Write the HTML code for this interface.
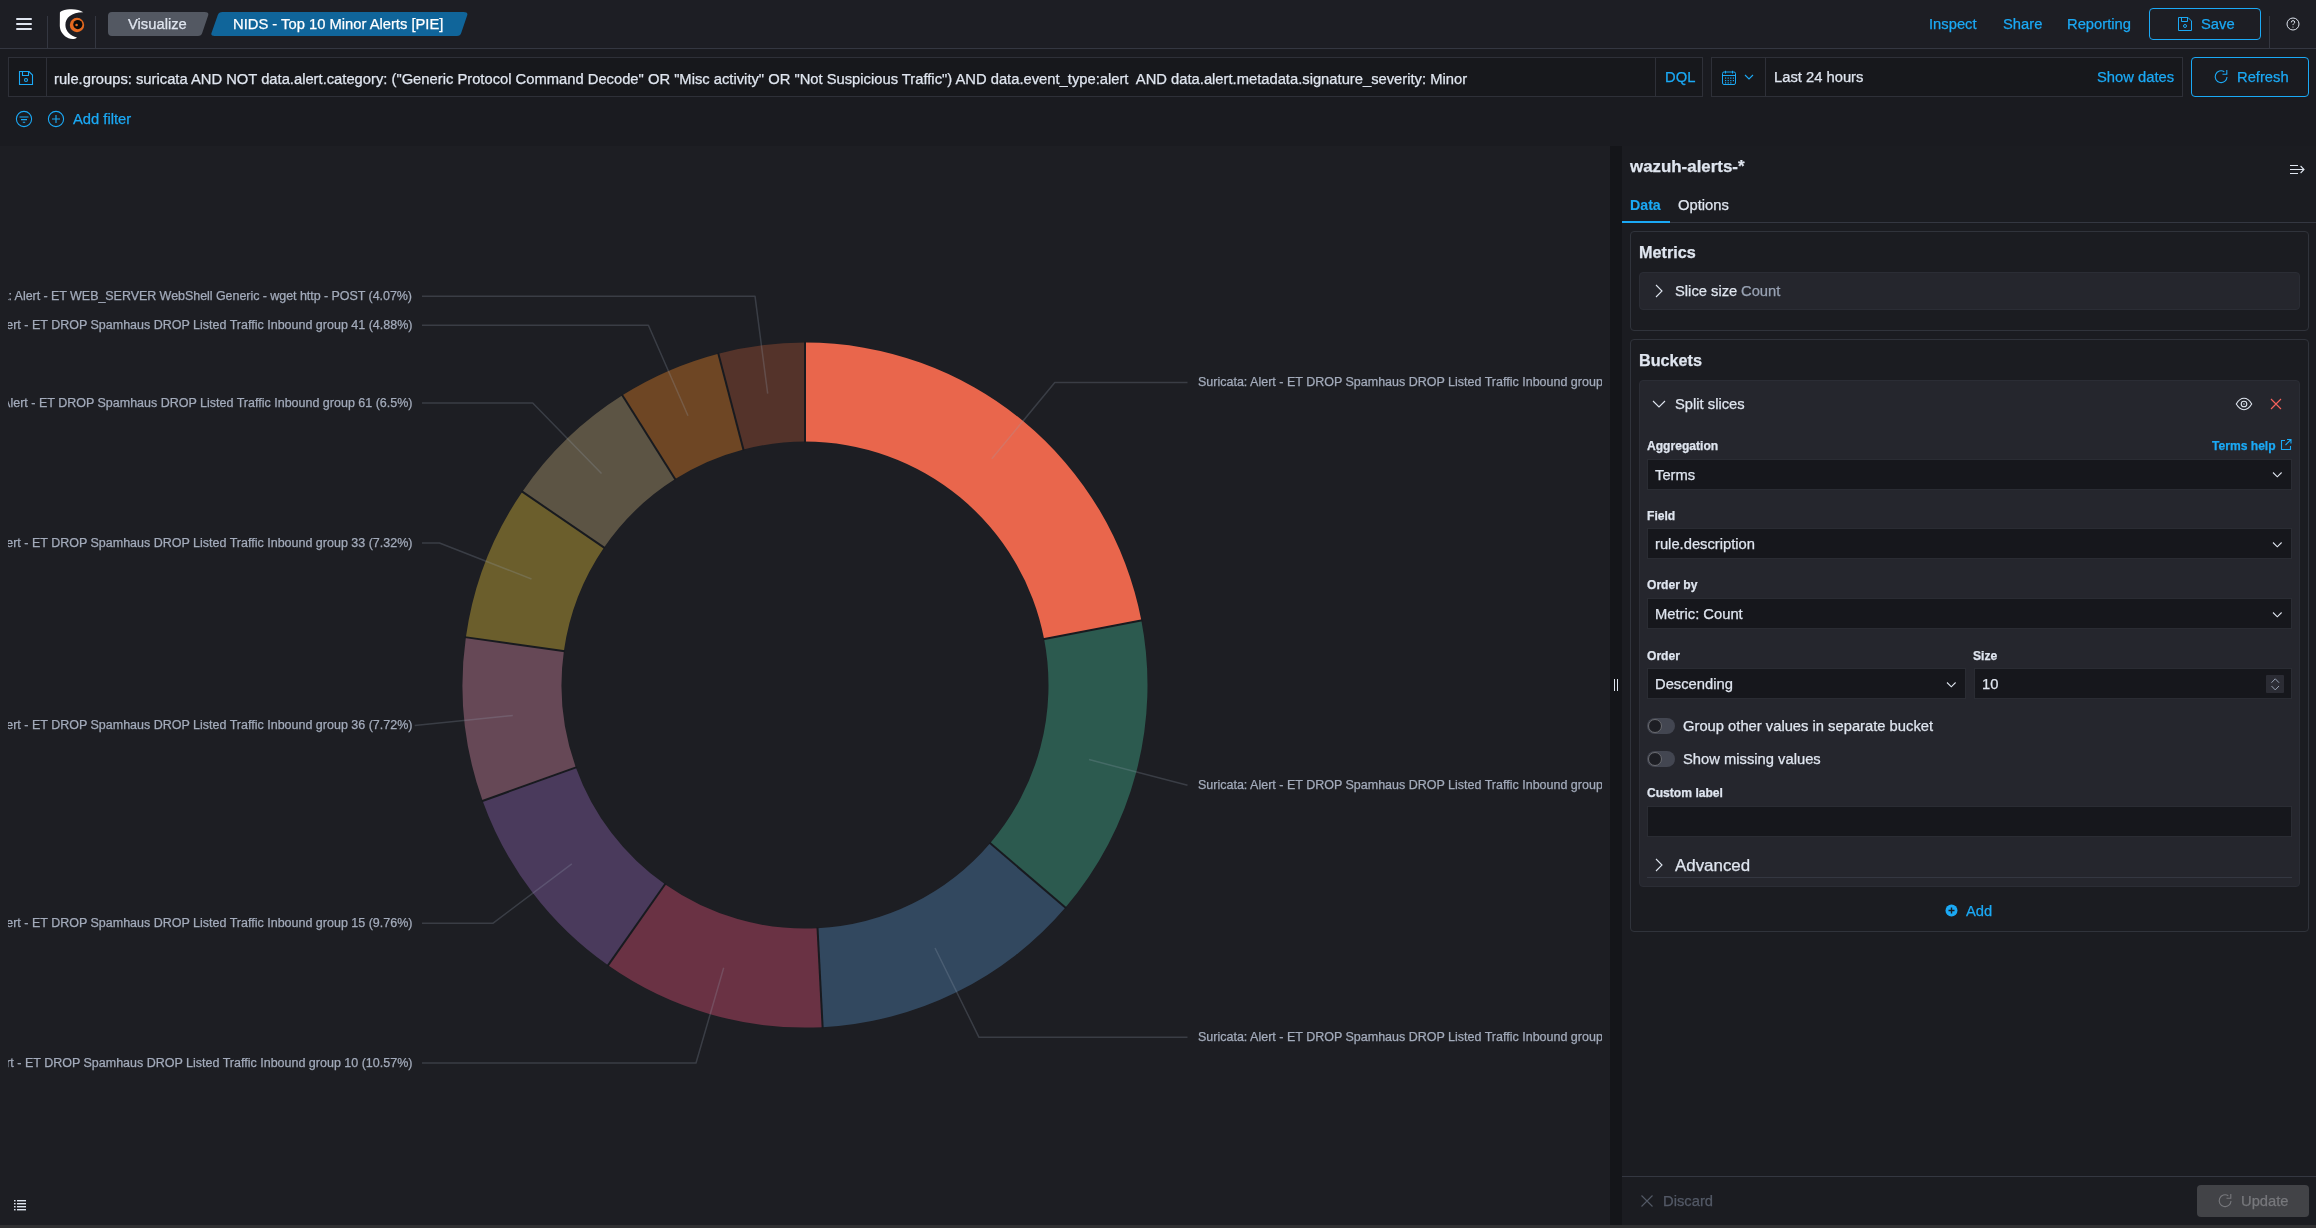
<!DOCTYPE html>
<html><head><meta charset="utf-8">
<style>
*{box-sizing:border-box;margin:0;padding:0}
html,body{width:2316px;height:1228px;overflow:hidden}
body{position:relative;background:#1A1B20;-webkit-font-smoothing:antialiased;font-family:"Liberation Sans",sans-serif;color:#DFE5EF;font-size:14px}
.a{position:absolute}
.t{position:absolute;white-space:pre;line-height:1;will-change:transform;-webkit-text-stroke:0.25px currentColor}
svg{display:block}
</style></head><body>
<div class="a" style="left:0px;top:0px;width:2316px;height:48px;background:#1D1E24;"></div>
<div class="a" style="left:0px;top:48px;width:2316px;height:1px;background:#343741;"></div>
<div class="a" style="left:16px;top:18px;width:16px;height:2px;background:#DFE5EF;border-radius:1px;"></div>
<div class="a" style="left:16px;top:23px;width:16px;height:2px;background:#DFE5EF;border-radius:1px;"></div>
<div class="a" style="left:16px;top:28px;width:16px;height:2px;background:#DFE5EF;border-radius:1px;"></div>
<div class="a" style="left:47px;top:16px;width:1px;height:32px;background:#343741;"></div>
<div class="a" style="left:95px;top:16px;width:1px;height:32px;background:#343741;"></div>
<svg class="a" style="left:0;top:0" width="120" height="48" viewBox="0 0 120 48">
<path fill="#FFFFFF" d="M83.3,12.3 C79.5,9.6 73.5,8.6 67,9.6 C63.5,10.2 60.6,11.3 59.9,12.6 L59.8,26 C60,31.5 63.5,36 68.5,38.3 C71.5,39.6 75,39.3 77,37.6 C70.5,36 65.4,31.2 65.4,25 C65.4,17.8 71.5,12.2 83.3,12.3 Z"/>
<circle cx="77" cy="25" r="7.2" fill="#E5691F"/>
<circle cx="77.8" cy="24.6" r="4.6" fill="#0A0A0A"/>
<circle cx="76.6" cy="25" r="1.3" fill="#E5691F"/>
</svg>
<svg class="a" style="left:100px;top:8px" width="380" height="32" viewBox="100 8 380 32">
<path fill="#535862" d="M112,12 L204.5,12 Q209,12 208.3,15 L202.2,33 Q201.4,36 198,36 L112,36 Q108,36 108,32 L108,16 Q108,12 112,12 Z"/>
<path fill="#10659A" d="M222.5,12 L463.5,12 Q468,12 467.3,15 L461.2,33 Q460.4,36 457,36 L214.5,36 Q210.5,36 211.5,33 L217.8,15 Q218.8,12 222.5,12 Z"/>
</svg>
<div class="t" style="left:128px;top:17.26px;font-size:14.75px;color:#DFE5EF;">Visualize</div>
<div class="t" style="left:233px;top:17.26px;font-size:14.75px;color:#FFFFFF;">NIDS - Top 10 Minor Alerts [PIE]</div>
<div class="t" style="left:1929px;top:17.26px;font-size:14.75px;color:#1BA9F5;">Inspect</div>
<div class="t" style="left:2003px;top:17.26px;font-size:14.75px;color:#1BA9F5;">Share</div>
<div class="t" style="left:2067px;top:17.26px;font-size:14.75px;color:#1BA9F5;">Reporting</div>
<div class="a" style="left:2149px;top:8px;width:112px;height:32px;background:transparent;border:1px solid #1BA9F5;border-radius:4px;"></div>
<svg class="a" style="left:2177px;top:16px" width="16" height="16" viewBox="0 0 16 16" fill="none" stroke="#1BA9F5" stroke-width="1">
<path d="M1.5,1.5 H11 L14.5,5 V14.5 H1.5 Z"/><path d="M4.5,1.5 V5.5 H10.5 V1.5"/><circle cx="8" cy="10" r="1.5"/></svg>
<div class="t" style="left:2201px;top:17.26px;font-size:14.75px;color:#1BA9F5;">Save</div>
<div class="a" style="left:2269px;top:16px;width:1px;height:32px;background:#343741;"></div>
<svg class="a" style="left:2285px;top:16px" width="16" height="16" viewBox="0 0 16 16" fill="none" stroke="#DFE5EF" stroke-width="1">
<circle cx="8" cy="8" r="6"/><path d="M6.3,6.4 Q6.3,4.6 8,4.6 Q9.7,4.6 9.7,6.2 Q9.7,7.2 8.6,7.8 Q8,8.1 8,9.1"/><circle cx="8" cy="11" r="0.6" fill="#DFE5EF" stroke="none"/></svg>
<div class="a" style="left:8px;top:57px;width:1695px;height:40px;background:#17181C;border:1px solid #2E3038;"></div>
<div class="a" style="left:46px;top:58px;width:1px;height:38px;background:#2E3038;"></div>
<svg class="a" style="left:18px;top:70px" width="16" height="16" viewBox="0 0 16 16" fill="none" stroke="#1BA9F5" stroke-width="1.1">
<path d="M1.5,1.5 H11 L14.5,5 V14.5 H1.5 Z"/><path d="M4.5,1.5 V5.5 H10.5 V1.5"/><circle cx="8" cy="10" r="1.5"/></svg>
<div class="t" style="left:54px;top:71.96px;font-size:14.75px;color:#DFE5EF;">rule.groups: suricata AND NOT data.alert.category: ("Generic Protocol Command Decode" OR "Misc activity" OR "Not Suspicious Traffic") AND data.event_type:alert  AND data.alert.metadata.signature_severity: Minor</div>
<div class="a" style="left:1655px;top:58px;width:1px;height:38px;background:#2E3038;"></div>
<div class="t" style="left:1665px;top:70.06px;font-size:14.75px;color:#1BA9F5;">DQL</div>
<div class="a" style="left:1711px;top:57px;width:472px;height:40px;background:#17181C;border:1px solid #2E3038;"></div>
<div class="a" style="left:1765px;top:58px;width:1px;height:38px;background:#2E3038;"></div>
<svg class="a" style="left:1721px;top:70px" width="16" height="16" viewBox="0 0 16 16" fill="none" stroke="#1BA9F5" stroke-width="1">
<rect x="1.5" y="2" width="13" height="12.5" rx="1.5"/><path d="M1.5,5.5 H14.5 M4.5,0.8 V3.5 M11.5,0.8 V3.5"/>
<g fill="#1BA9F5" stroke="none"><rect x="4" y="7.5" width="1.2" height="1.2"/><rect x="6.6" y="7.5" width="1.2" height="1.2"/><rect x="9.2" y="7.5" width="1.2" height="1.2"/><rect x="11.8" y="7.5" width="1.2" height="1.2"/>
<rect x="4" y="10" width="1.2" height="1.2"/><rect x="6.6" y="10" width="1.2" height="1.2"/><rect x="9.2" y="10" width="1.2" height="1.2"/><rect x="11.8" y="10" width="1.2" height="1.2"/>
<rect x="4" y="12.3" width="1.2" height="1.2"/><rect x="6.6" y="12.3" width="1.2" height="1.2"/><rect x="9.2" y="12.3" width="1.2" height="1.2"/></g></svg>
<svg class="a" style="left:1743px;top:73px" width="12" height="8" viewBox="0 0 12 8" fill="none" stroke="#1BA9F5" stroke-width="1.1"><path d="M2,2 L6,6 L10,2"/></svg>
<div class="t" style="left:1774px;top:70.06px;font-size:14.75px;color:#DFE5EF;">Last 24 hours</div>
<div class="t" style="right:142px;top:70.06px;font-size:14.75px;color:#1BA9F5;">Show dates</div>
<div class="a" style="left:2191px;top:57px;width:118px;height:40px;background:transparent;border:1px solid #1BA9F5;border-radius:4px;"></div>
<svg class="a" style="left:2213px;top:69px" width="16" height="16" viewBox="0 0 16 16" fill="none" stroke="#1BA9F5" stroke-width="1.1">
<path d="M11.3,2.75 A5.9,5.9 0 1 0 14,7.9"/><path d="M13.8,1 V5.2 H9.5"/></svg>
<div class="t" style="left:2237px;top:70.06px;font-size:14.75px;color:#1BA9F5;">Refresh</div>
<svg class="a" style="left:15px;top:110px" width="18" height="18" viewBox="0 0 18 18" fill="none" stroke="#1BA9F5" stroke-width="1.1">
<circle cx="9" cy="9" r="7.6"/><path d="M4.5,7 H13.5 M6,9.6 H12 M7.8,12.2 H10.2"/></svg>
<svg class="a" style="left:47px;top:110px" width="18" height="18" viewBox="0 0 18 18" fill="none" stroke="#1BA9F5" stroke-width="1.1">
<circle cx="9" cy="9" r="7.6"/><path d="M5,9 H13 M9,5 V13"/></svg>
<div class="t" style="left:73px;top:112.26px;font-size:14.75px;color:#1BA9F5;">Add filter</div>
<div class="a" style="left:0px;top:146px;width:1610px;height:1079px;background:#1D1E23;"></div>
<div class="a" style="left:1610px;top:146px;width:12px;height:1079px;background:#141519;"></div>
<div class="a" style="left:0px;top:1225px;width:2316px;height:3px;background:#303032;"></div>
<div class="a" style="left:1614px;top:679px;width:1px;height:12px;background:#DFE5EF;"></div>
<div class="a" style="left:1617px;top:679px;width:1px;height:12px;background:#DFE5EF;"></div>
<svg class="a" style="left:0;top:0" width="1610" height="1228" viewBox="0 0 1610 1228">
<path fill="#E9664C" d="M805.00,342.60 A342.5,342.5 0 0 1 1141.32,620.33 L1044.11,639.06 A243.5,243.5 0 0 0 805.00,441.60 Z"/>
<path fill="#2C5A4F" d="M1141.32,620.33 A342.5,342.5 0 0 1 1065.44,907.54 L990.16,843.24 A243.5,243.5 0 0 0 1044.11,639.06 Z"/>
<path fill="#32485F" d="M1065.44,907.54 A342.5,342.5 0 0 1 822.63,1027.15 L817.53,928.28 A243.5,243.5 0 0 0 990.16,843.24 Z"/>
<path fill="#6A3244" d="M822.63,1027.15 A342.5,342.5 0 0 1 608.06,965.32 L664.99,884.32 A243.5,243.5 0 0 0 817.53,928.28 Z"/>
<path fill="#4A3A5C" d="M608.06,965.32 A342.5,342.5 0 0 1 482.67,800.89 L575.84,767.42 A243.5,243.5 0 0 0 664.99,884.32 Z"/>
<path fill="#664856" d="M482.67,800.89 A342.5,342.5 0 0 1 465.86,637.26 L563.89,651.09 A243.5,243.5 0 0 0 575.84,767.42 Z"/>
<path fill="#6B5E2C" d="M465.86,637.26 A342.5,342.5 0 0 1 522.33,491.70 L604.04,547.60 A243.5,243.5 0 0 0 563.89,651.09 Z"/>
<path fill="#5C5444" d="M522.33,491.70 A342.5,342.5 0 0 1 622.39,395.34 L675.17,479.10 A243.5,243.5 0 0 0 604.04,547.60 Z"/>
<path fill="#6E4624" d="M622.39,395.34 A342.5,342.5 0 0 1 718.38,353.74 L743.42,449.52 A243.5,243.5 0 0 0 675.17,479.10 Z"/>
<path fill="#54332A" d="M718.38,353.74 A342.5,342.5 0 0 1 805.00,342.60 L805.00,441.60 A243.5,243.5 0 0 0 743.42,449.52 Z"/>
<g stroke="#181A1F" stroke-width="2" fill="none"><path d="M805.00,341.60 L805.00,442.60"/><path d="M1142.30,620.15 L1043.12,639.24"/><path d="M1066.20,908.19 L989.40,842.59"/><path d="M822.68,1028.14 L817.48,927.28"/><path d="M607.49,966.13 L665.56,883.50"/><path d="M481.73,801.23 L576.78,767.08"/><path d="M464.87,637.12 L564.88,651.22"/><path d="M521.51,491.13 L604.86,548.17"/><path d="M621.86,394.50 L675.71,479.94"/><path d="M718.12,352.77 L743.67,450.48"/></g>
<g stroke="rgba(152,162,179,0.24)" stroke-width="1.5" fill="none" stroke-linejoin="round"><path d="M422,296.2 H755 L767.7,393.7"/><path d="M422,325.3 H648.4 L688,415.7"/><path d="M422,403 H532.7 L601.5,473.5"/><path d="M422,543 H439.5 L531.5,579"/><path d="M414.7,725.4 L512.8,715.5"/><path d="M422,923.3 H492.8 L571.8,863.8"/><path d="M422,1063 H696 L723.7,967.7"/><path d="M991.8,458.8 L1054.8,382.6 H1187.5"/><path d="M1089,759.6 L1187.5,785.3"/><path d="M935,948 L979,1037.3 H1187.5"/></g>
</svg>
<div class="a" style="left:8px;top:146px;width:1594px;height:1079px;overflow:hidden">
<div class="t" style="right:1189.95px;top:143.88px;font-size:12.5px;color:#A3ABBB;letter-spacing:-0.05px;">Suricata: Alert - ET WEB_SERVER WebShell Generic - wget http - POST (4.07%)</div>
<div class="t" style="right:1190px;top:172.98px;font-size:12.5px;color:#A3ABBB;">Suricata: Alert - ET DROP Spamhaus DROP Listed Traffic Inbound group 41 (4.88%)</div>
<div class="t" style="right:1190px;top:250.68px;font-size:12.5px;color:#A3ABBB;">Suricata: Alert - ET DROP Spamhaus DROP Listed Traffic Inbound group 61 (6.5%)</div>
<div class="t" style="right:1190px;top:390.68px;font-size:12.5px;color:#A3ABBB;">Suricata: Alert - ET DROP Spamhaus DROP Listed Traffic Inbound group 33 (7.32%)</div>
<div class="t" style="right:1190px;top:573.07px;font-size:12.5px;color:#A3ABBB;">Suricata: Alert - ET DROP Spamhaus DROP Listed Traffic Inbound group 36 (7.72%)</div>
<div class="t" style="right:1190px;top:770.97px;font-size:12.5px;color:#A3ABBB;">Suricata: Alert - ET DROP Spamhaus DROP Listed Traffic Inbound group 15 (9.76%)</div>
<div class="t" style="right:1190px;top:910.67px;font-size:12.5px;color:#A3ABBB;">Suricata: Alert - ET DROP Spamhaus DROP Listed Traffic Inbound group 10 (10.57%)</div>
<div class="t" style="left:1190px;top:230.38px;font-size:12.5px;color:#A3ABBB">Suricata: Alert - ET DROP Spamhaus DROP Listed Traffic Inbound group 22 (21.97%)</div>
<div class="t" style="left:1190px;top:632.97px;font-size:12.5px;color:#A3ABBB">Suricata: Alert - ET DROP Spamhaus DROP Listed Traffic Inbound group 2 (14.23%)</div>
<div class="t" style="left:1190px;top:884.97px;font-size:12.5px;color:#A3ABBB">Suricata: Alert - ET DROP Spamhaus DROP Listed Traffic Inbound group 4 (12.98%)</div>
</div>
<svg class="a" style="left:13px;top:1199px" width="14" height="12" viewBox="0 0 14 12" fill="#DFE5EF">
<rect x="1" y="1" width="1.6" height="1.4"/><rect x="1" y="4" width="1.6" height="1.4"/><rect x="1" y="7" width="1.6" height="1.4"/><rect x="1" y="10" width="1.6" height="1.4"/>
<rect x="4" y="1" width="9" height="1.4"/><rect x="4" y="4" width="9" height="1.4"/><rect x="4" y="7" width="9" height="1.4"/><rect x="4" y="10" width="9" height="1.4"/></svg>
<div class="a" style="left:1622px;top:146px;width:694px;height:1079px;background:#1B1C21;"></div>
<div class="t" style="left:1630px;top:158.53px;font-size:16.9px;color:#DFE5EF;font-weight:700;">wazuh-alerts-*</div>
<svg class="a" style="left:2289px;top:162px" width="16" height="14" viewBox="0 0 16 14" fill="none" stroke="#DFE5EF" stroke-width="1.1">
<path d="M1,3.5 H9 M1,7.5 H15 M1,11.5 H9 M11.6,4 L15,7.5 L11.6,11"/></svg>
<div class="t" style="left:1630px;top:198.03px;font-size:14.2px;color:#1BA9F5;font-weight:700;-webkit-text-stroke:0.1px currentColor;">Data</div>
<div class="t" style="left:1678px;top:197.56px;font-size:14.75px;color:#DFE5EF;">Options</div>
<div class="a" style="left:1622px;top:222px;width:694px;height:1px;background:#343741;"></div>
<div class="a" style="left:1622px;top:221px;width:48px;height:2px;background:#1BA9F5;"></div>
<div class="a" style="left:1630px;top:231px;width:679px;height:100px;background:transparent;border:1px solid #30333B;border-radius:4px;"></div>
<div class="t" style="left:1639px;top:244.23px;font-size:16.2px;color:#DFE5EF;font-weight:700;">Metrics</div>
<div class="a" style="left:1639px;top:272px;width:661px;height:38px;background:#25262D;border:1px solid #2B2D35;border-radius:4px;"></div>
<svg class="a" style="left:1652px;top:283px" width="14" height="16" viewBox="0 0 14 16" fill="none" stroke="#DFE5EF" stroke-width="1.1"><path d="M4,2 L10,8 L4,14"/></svg>
<div class="t" style="left:1675px;top:284.36px;font-size:14.75px;color:#DFE5EF;">Slice size</div>
<div class="t" style="left:1741px;top:284.36px;font-size:14.75px;color:#98A2B3;">Count</div>
<div class="a" style="left:1630px;top:339px;width:679px;height:593px;background:transparent;border:1px solid #30333B;border-radius:4px;"></div>
<div class="t" style="left:1639px;top:352.23px;font-size:16.2px;color:#DFE5EF;font-weight:700;">Buckets</div>
<div class="a" style="left:1639px;top:380px;width:661px;height:507px;background:#25262D;border:1px solid #2B2D35;border-radius:4px;"></div>
<svg class="a" style="left:1651px;top:397px" width="16" height="14" viewBox="0 0 16 14" fill="none" stroke="#DFE5EF" stroke-width="1.1"><path d="M2,4 L8,10 L14,4"/></svg>
<div class="t" style="left:1675px;top:396.76px;font-size:14.75px;color:#DFE5EF;">Split slices</div>
<svg class="a" style="left:2235px;top:396px" width="18" height="16" viewBox="0 0 18 16" fill="none" stroke="#DFE5EF" stroke-width="1.1">
<path d="M1.3,8 C3.8,3.8 6.2,2.3 9,2.3 C11.8,2.3 14.2,3.8 16.7,8 C14.2,12.2 11.8,13.7 9,13.7 C6.2,13.7 3.8,12.2 1.3,8 Z"/><circle cx="9" cy="8" r="2.8"/><circle cx="9" cy="8" r="0.9" fill="#8A8F9A" stroke="none"/></svg>
<svg class="a" style="left:2268px;top:396px" width="16" height="16" viewBox="0 0 16 16" fill="none" stroke="#F4615B" stroke-width="1.15"><path d="M3,3 L13,13 M13,3 L3,13"/></svg>
<div class="t" style="left:1647px;top:439.62px;font-size:12.1px;color:#DFE5EF;font-weight:700;">Aggregation</div>
<div class="t" style="right:40px;top:439.62px;font-size:12.1px;color:#1BA9F5;font-weight:700;">Terms help</div>
<svg class="a" style="left:2280px;top:438px" width="12" height="13" viewBox="0 0 12 13" fill="none" stroke="#1BA9F5" stroke-width="1.1">
<path d="M5,2.5 H1.5 V11.5 H10.5 V8 M7,1.5 H11 V5.5 M11,1.5 L5.5,7"/></svg>
<div class="a" style="left:1647px;top:458.5px;width:645px;height:31px;background:#16171C;border:1px solid #2A2C33;"></div>
<div class="t" style="left:1654.5px;top:467.56px;font-size:14.75px;color:#DFE5EF;">Terms</div>
<svg class="a" style="left:2271px;top:471.0px" width="12" height="8" viewBox="0 0 12 8" fill="none" stroke="#DFE5EF" stroke-width="1.1"><path d="M2,1.5 L6.3,5.8 L10.6,1.5"/></svg>
<div class="t" style="left:1647px;top:509.81px;font-size:12.1px;color:#DFE5EF;font-weight:700;">Field</div>
<div class="a" style="left:1647px;top:528px;width:645px;height:31px;background:#16171C;border:1px solid #2A2C33;"></div>
<div class="t" style="left:1654.5px;top:537.06px;font-size:14.75px;color:#DFE5EF;">rule.description</div>
<svg class="a" style="left:2271px;top:540.5px" width="12" height="8" viewBox="0 0 12 8" fill="none" stroke="#DFE5EF" stroke-width="1.1"><path d="M2,1.5 L6.3,5.8 L10.6,1.5"/></svg>
<div class="t" style="left:1647px;top:579.31px;font-size:12.1px;color:#DFE5EF;font-weight:700;">Order by</div>
<div class="a" style="left:1647px;top:598px;width:645px;height:31px;background:#16171C;border:1px solid #2A2C33;"></div>
<div class="t" style="left:1654.5px;top:607.06px;font-size:14.75px;color:#DFE5EF;">Metric: Count</div>
<svg class="a" style="left:2271px;top:610.5px" width="12" height="8" viewBox="0 0 12 8" fill="none" stroke="#DFE5EF" stroke-width="1.1"><path d="M2,1.5 L6.3,5.8 L10.6,1.5"/></svg>
<div class="t" style="left:1647px;top:649.81px;font-size:12.1px;color:#DFE5EF;font-weight:700;">Order</div>
<div class="t" style="left:1973px;top:649.81px;font-size:12.1px;color:#DFE5EF;font-weight:700;">Size</div>
<div class="a" style="left:1647px;top:668px;width:319px;height:31px;background:#16171C;border:1px solid #2A2C33;"></div>
<div class="t" style="left:1654.5px;top:677.06px;font-size:14.75px;color:#DFE5EF;">Descending</div>
<svg class="a" style="left:1945px;top:680.5px" width="12" height="8" viewBox="0 0 12 8" fill="none" stroke="#DFE5EF" stroke-width="1.1"><path d="M2,1.5 L6.3,5.8 L10.6,1.5"/></svg>
<div class="a" style="left:1974px;top:668px;width:318px;height:31px;background:#16171C;border:1px solid #2A2C33;"></div>
<div class="t" style="left:1981.5px;top:677.06px;font-size:14.75px;color:#DFE5EF;">10</div>
<div class="a" style="left:2266px;top:675px;width:18px;height:18px;background:#2B2C34;border-radius:1px;"></div>
<svg class="a" style="left:2269px;top:677px" width="12" height="14" viewBox="0 0 12 14" fill="none" stroke="#98A2B3" stroke-width="1"><path d="M2.5,5.7 L6.25,1.8 L10,5.7 M2.5,9 L6.25,12.9 L10,9"/></svg>
<div class="a" style="left:1647px;top:718px;width:28px;height:16px;background:#434651;border-radius:8px;"></div>
<div class="a" style="left:1648px;top:719px;width:14px;height:14px;background:#1D1E24;border:1px solid #6A6B70;border-radius:7px;"></div>
<div class="t" style="left:1683px;top:719.16px;font-size:14.75px;color:#DFE5EF;">Group other values in separate bucket</div>
<div class="a" style="left:1647px;top:751px;width:28px;height:16px;background:#434651;border-radius:8px;"></div>
<div class="a" style="left:1648px;top:752px;width:14px;height:14px;background:#1D1E24;border:1px solid #6A6B70;border-radius:7px;"></div>
<div class="t" style="left:1683px;top:752.26px;font-size:14.75px;color:#DFE5EF;">Show missing values</div>
<div class="t" style="left:1647px;top:786.72px;font-size:12.1px;color:#DFE5EF;font-weight:700;">Custom label</div>
<div class="a" style="left:1647px;top:805.5px;width:645px;height:31px;background:#16171C;border:1px solid #2A2C33;"></div>
<svg class="a" style="left:1652px;top:857px" width="14" height="16" viewBox="0 0 14 16" fill="none" stroke="#DFE5EF" stroke-width="1.1"><path d="M4,2 L10,8 L4,14"/></svg>
<div class="t" style="left:1675px;top:857.73px;font-size:16.9px;color:#DFE5EF;">Advanced</div>
<div class="a" style="left:1647px;top:877px;width:645px;height:1px;background:#343741;"></div>
<svg class="a" style="left:1945px;top:904px" width="13" height="13" viewBox="0 0 13 13"><circle cx="6.5" cy="6.5" r="6" fill="#1BA9F5"/><path d="M3.5,6.5 H9.5 M6.5,3.5 V9.5" stroke="#1B1C21" stroke-width="1.4"/></svg>
<div class="t" style="left:1966px;top:903.66px;font-size:14.75px;color:#1BA9F5;">Add</div>
<div class="a" style="left:1622px;top:1176px;width:694px;height:1px;background:#343741;"></div>
<svg class="a" style="left:1640px;top:1194px" width="14" height="14" viewBox="0 0 14 14" fill="none" stroke="#535966" stroke-width="1.1"><path d="M1.5,1.5 L12.5,12.5 M12.5,1.5 L1.5,12.5"/></svg>
<div class="t" style="left:1663px;top:1194.26px;font-size:14.75px;color:#535966;">Discard</div>
<div class="a" style="left:2197px;top:1185px;width:112px;height:32px;background:#424347;border-radius:4px;"></div>
<svg class="a" style="left:2217px;top:1193px" width="16" height="16" viewBox="0 0 16 16" fill="none" stroke="#77787C" stroke-width="1.1">
<path d="M11.3,2.75 A5.9,5.9 0 1 0 14,7.9"/><path d="M13.8,1 V5.2 H9.5"/></svg>
<div class="t" style="left:2241px;top:1194.26px;font-size:14.75px;color:#77787C;">Update</div>
</body></html>
